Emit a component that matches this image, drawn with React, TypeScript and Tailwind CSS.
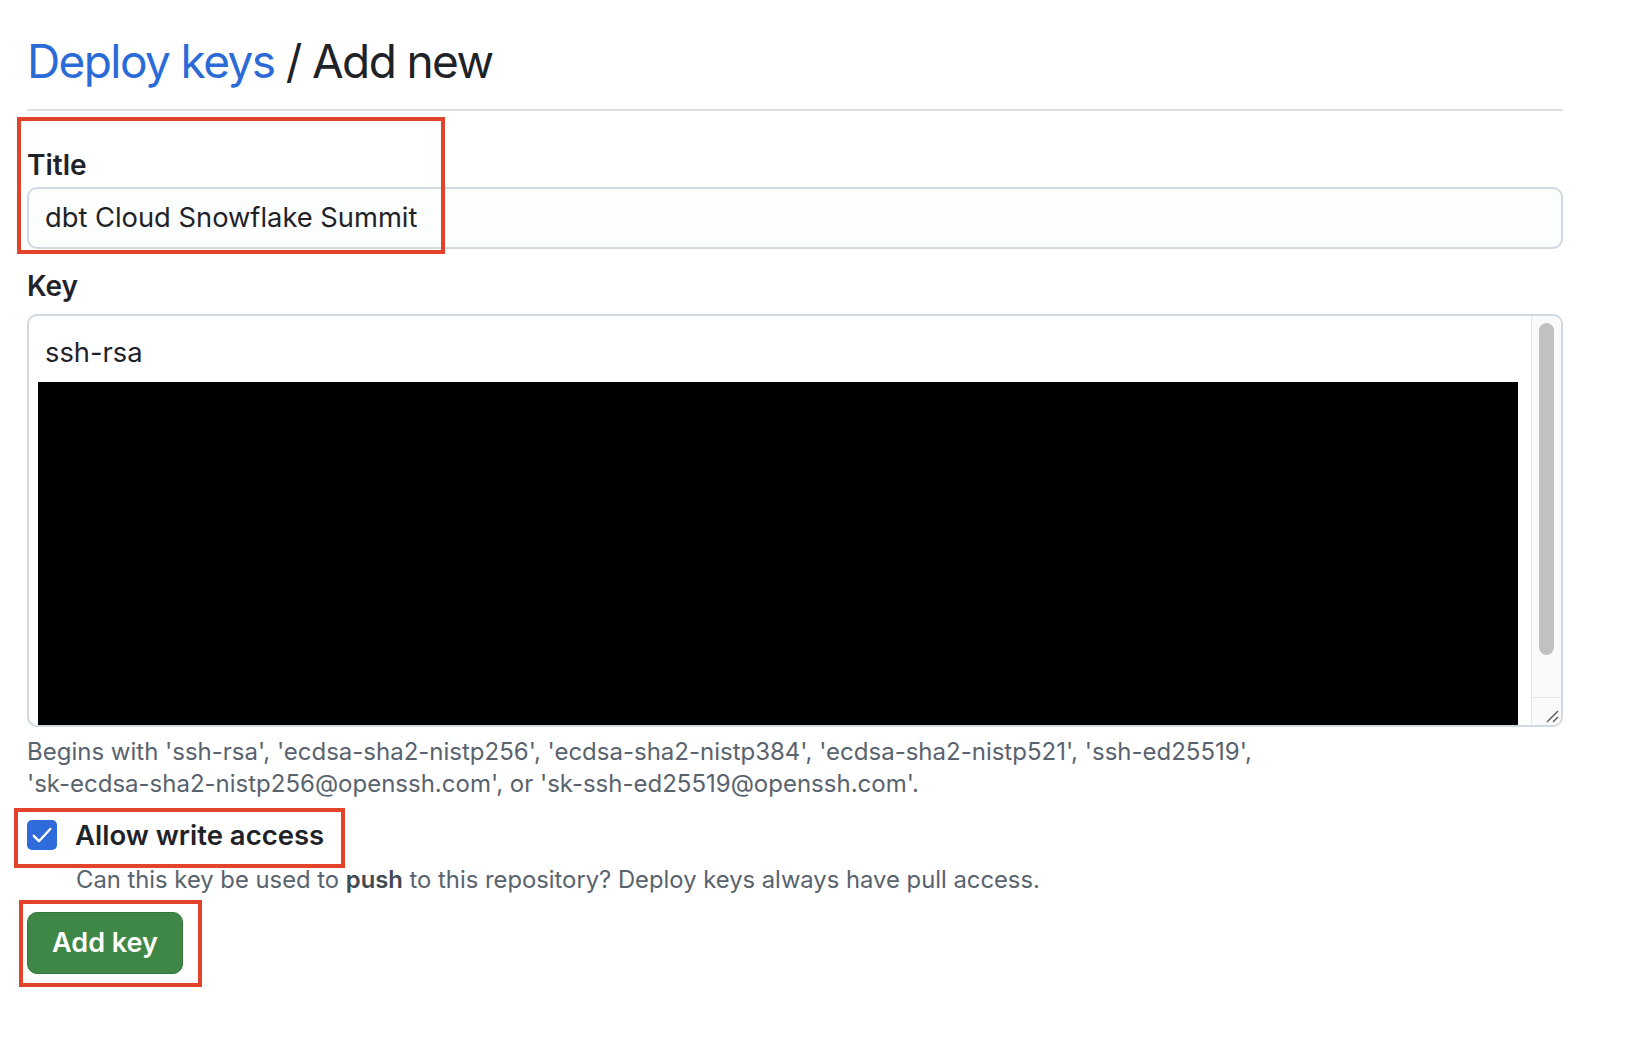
import React from 'react';

const FONT = { fontFamily: 'Inter, "Liberation Sans", Arial, sans-serif' };

/**
 * Red annotation frame drawn over the form
 */
function Mark({ className }: { className: string }) {
  return <div className={`pointer-events-none absolute border-[4px] border-[#e4432b] ${className}`} />;
}

function CheckIcon() {
  return (
    <svg className="w-[22px] h-[22px]" viewBox="0 0 16 16" fill="none" stroke="white" strokeWidth={1.7} strokeLinecap="round" strokeLinejoin="round">
      <path d="M2 8.6l3.8 3.9L14 3.6" />
    </svg>
  );
}

export default function App() {
  return (
    <div className="min-h-screen bg-white text-[#1f2328]" style={FONT}>
      <div className="relative w-[1563px] pl-[27px]">
        {/* Annotations */}
        <Mark className="left-[17px] top-[117px] w-[428px] h-[137px]" />
        <Mark className="left-[14px] top-[808px] w-[331px] h-[60px]" />
        <Mark className="left-[19px] top-[900px] w-[183px] h-[87px]" />

        {/* Header */}
        <div className="pt-[33px] pb-[20px] border-b-2 border-[#d8dee4]">
          <h1 className="text-[46px] leading-[56px] font-normal tracking-[-0.035em]">
            <span className="text-[#2b6bd8]">Deploy keys</span> / Add new
          </h1>
        </div>

        {/* Title */}
        <div className="pt-[37px]">
          <label className="block text-[28px] leading-[34px] font-semibold">Title</label>
          <div className="mt-[5px] h-[62px] rounded-[10px] border-2 border-[#d1d9e0] bg-[#fcfdfd] flex items-center pl-[16px] text-[27.3px]">
            dbt Cloud Snowflake Summit
          </div>
        </div>

        {/* Key */}
        <div className="pt-[20px]">
          <label className="block text-[28px] leading-[34px] font-semibold">Key</label>
          <div className="mt-[11px] h-[413px] rounded-[10px] border-2 border-[#d1d9e0] bg-white flex overflow-hidden">
            <div className="flex-1 flex flex-col pl-[16px] pt-[20px]">
              <div className="text-[27.3px] leading-[34px]">ssh-rsa</div>
              <div className="-ml-[7px] mt-[12px] w-[1480px] flex-1 bg-black" />
            </div>
            <div className="w-[30px] flex flex-col border-l border-[#e6e6e6] bg-[#fafafa]">
              <div className="flex-1 px-[7px] pt-[7px] pb-[42px]">
                <div className="h-full rounded-full bg-[#c1c1c1]" />
              </div>
              <div className="h-[28px] border-t border-[#e6e6e6] relative">
                <svg className="absolute right-[2px] bottom-[2px] w-[14px] h-[14px]" viewBox="0 0 14 14" stroke="#555" strokeWidth={1.4}>
                  <path d="M2 13L13 2M8 13l5-5" />
                </svg>
              </div>
            </div>
          </div>
          <p className="mt-[9px] text-[24px] leading-[32px] text-[#59636e]">
            Begins with 'ssh-rsa', 'ecdsa-sha2-nistp256', 'ecdsa-sha2-nistp384', 'ecdsa-sha2-nistp521', 'ssh-ed25519',
            <br />
            'sk-ecdsa-sha2-nistp256@openssh.com', or 'sk-ssh-ed25519@openssh.com'.
          </p>
        </div>

        {/* Write access */}
        <div className="pt-[18px]">
          <div className="flex items-center gap-[18px] h-[34px]">
            <div className="w-[30px] h-[30px] rounded-[5px] bg-[#2f6bdb] flex items-center justify-center">
              <CheckIcon />
            </div>
            <span className="text-[27.5px] leading-[34px] font-semibold">Allow write access</span>
          </div>
          <p className="mt-[12px] pl-[49px] text-[23.8px] leading-[32px] text-[#59636e]">
            Can this key be used to <b className="font-semibold text-[#424a53]">push</b> to this repository? Deploy keys always have pull access.
          </p>
        </div>

        {/* Submit */}
        <div className="pt-[16px]">
          <button className="h-[62px] w-[156px] rounded-[10px] bg-[#3e8746] border border-[#33773b] text-white text-[27px] font-semibold">
            Add key
          </button>
        </div>
      </div>
    </div>
  );
}
